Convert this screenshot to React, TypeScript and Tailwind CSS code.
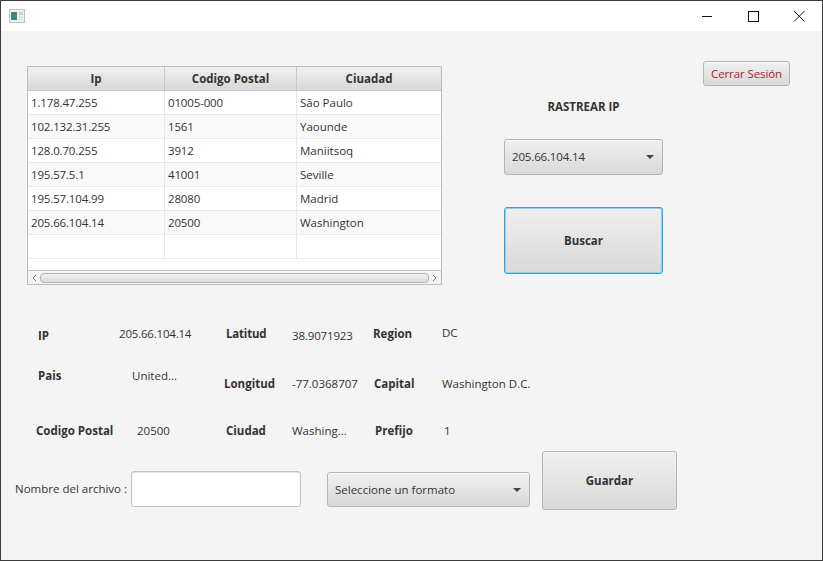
const rows = [
  ['1.178.47.255', '01005-000', 'São Paulo'],
  ['102.132.31.255', '1561', 'Yaounde'],
  ['128.0.70.255', '3912', 'Maniitsoq'],
  ['195.57.5.1', '41001', 'Seville'],
  ['195.57.104.99', '28080', 'Madrid'],
  ['205.66.104.14', '20500', 'Washington'],
  ['', '', ''],
];

const btn =
  'bg-gradient-to-b from-[#f0f0f0] to-[#d9d9d9] border border-[#b4b4b4] rounded-[3px] shadow-[inset_0_1px_0_#fafafa]';

const Caret = () => (
  <div className="w-0 h-0 border-l-[4px] border-r-[4px] border-t-[4px] border-l-transparent border-r-transparent border-t-[#444]" />
);

const App = () => {
  return (
    <div className="w-[823px] h-[561px] flex flex-col bg-[#f4f4f4] border border-[#3c3c3c] overflow-hidden text-[11.5px] leading-[16px] text-[#333] font-['Open_Sans',sans-serif]">
      {/* title bar */}
      <div className="h-[30px] bg-white flex items-center shrink-0">
        <svg width="16" height="14" viewBox="0 0 16 14" className="ml-[8px]">
          <rect x="0.5" y="0.5" width="15" height="13" fill="#eef1f0" stroke="#b9c2c0" />
          <rect x="2" y="3" width="6" height="8" fill="#3f8583" />
          <rect x="10" y="3" width="4" height="3" fill="#c9d3d2" />
          <rect x="10" y="7" width="4" height="4" fill="#dfe5e4" />
        </svg>
        <div className="ml-auto flex">
          <svg width="46" height="30" viewBox="0 0 46 30">
            <line x1="18" y1="15.5" x2="28" y2="15.5" stroke="#111" />
          </svg>
          <svg width="46" height="30" viewBox="0 0 46 30">
            <rect x="18.5" y="10.5" width="10" height="10" fill="none" stroke="#111" />
          </svg>
          <svg width="46" height="30" viewBox="0 0 46 30">
            <path d="M18 10 L28.5 20.5 M28.5 10 L18 20.5" stroke="#111" fill="none" />
          </svg>
        </div>
      </div>

      {/* top: table, search, logout */}
      <div className="flex items-start pt-[30px] pl-[26px]">
        <div className="w-[415px] h-[219px] mt-[5px] border border-[#bdbdbd] bg-white flex flex-col">
          <div className="flex h-[24px] shrink-0 font-bold bg-gradient-to-b from-[#f0f0f0] to-[#d8d8d8] border-b border-[#c4c4c4]">
            <div className="w-[137px] border-r border-[#c8c8c8] flex items-center justify-center">Ip</div>
            <div className="w-[132px] border-r border-[#c8c8c8] flex items-center justify-center">Codigo Postal</div>
            <div className="flex-1 flex items-center justify-center">Ciuadad</div>
          </div>
          <div className="flex-1 overflow-hidden">
            {rows.map((r, i) => (
              <div
                key={i}
                className={`flex h-[24px] border-b border-[#eaeaea] ${i % 2 === 1 ? 'bg-[#f9f9f9]' : 'bg-white'}`}
              >
                <div className="w-[137px] pl-[3px] border-r border-[#e8e8e8] flex items-center tracking-[-0.15px]">{r[0]}</div>
                <div className="w-[132px] pl-[3px] border-r border-[#e8e8e8] flex items-center tracking-[-0.15px]">{r[1]}</div>
                <div className="flex-1 pl-[3px] flex items-center">{r[2]}</div>
              </div>
            ))}
          </div>
          <div className="h-[14px] shrink-0 bg-[#f2f2f2] border-t border-[#c8c8c8] flex items-center px-[3px] gap-[2px]">
            <svg width="7" height="8" viewBox="0 0 7 8">
              <path d="M5 1 L2 4 L5 7" fill="none" stroke="#777" />
            </svg>
            <div className="flex-1 h-[10px] rounded-[4px] border border-[#b4b4b4] bg-gradient-to-b from-[#f0f0f0] to-[#dcdcdc]" />
            <svg width="7" height="8" viewBox="0 0 7 8">
              <path d="M2 1 L5 4 L2 7" fill="none" stroke="#777" />
            </svg>
          </div>
        </div>

        <div className="w-[159px] ml-[62px] mt-[38px] flex flex-col">
          <div className="font-bold text-center h-[16px]">RASTREAR IP</div>
          <div className={`${btn} mt-[24px] h-[36px] flex items-center pl-[7px] pr-[8px] justify-between`}>
            <span className="tracking-[-0.15px]">205.66.104.14</span>
            <Caret />
          </div>
          <div className="mt-[32px] h-[67px] rounded-[3px] border border-[#2ba6de] shadow-[inset_0_0_0_1px_#8fd0ee] bg-gradient-to-b from-[#efefef] to-[#d9d9d9] flex items-center justify-center font-bold">
            Buscar
          </div>
        </div>

        <div className={`${btn} ml-[40px] w-[87px] h-[25px] flex items-center justify-center text-[#a81c1c] tracking-[-0.1px]`}>
          Cerrar Sesión
        </div>
      </div>

      {/* info */}
      <div className="flex pl-[37px] mt-[41px] h-[16px]">
        <div className="w-[81px] mt-[2px] font-bold">IP</div>
        <div className="w-[107px] tracking-[-0.2px]">205.66.104.14</div>
        <div className="w-[66px] font-bold tracking-[-0.2px]">Latitud</div>
        <div className="w-[81px] mt-[2px] tracking-[-0.15px]">38.9071923</div>
        <div className="w-[69px] font-bold">Region</div>
        <div className="-mt-[1px]">DC</div>
      </div>
      <div className="flex pl-[37px] mt-[26px] h-[24px]">
        <div className="w-[94px] font-bold">Pais</div>
        <div className="w-[92px]">United...</div>
        <div className="w-[68px] mt-[8px] font-bold">Longitud</div>
        <div className="w-[82px] mt-[8px]">-77.0368707</div>
        <div className="w-[68px] mt-[8px] font-bold">Capital</div>
        <div className="mt-[8px]">Washington D.C.</div>
      </div>
      <div className="flex pl-[35px] mt-[31px] h-[16px]">
        <div className="w-[101px] font-bold">Codigo Postal</div>
        <div className="w-[89px]">20500</div>
        <div className="w-[66px] font-bold">Ciudad</div>
        <div className="w-[83px]">Washing...</div>
        <div className="w-[69px] font-bold">Prefijo</div>
        <div>1</div>
      </div>

      {/* save */}
      <div className="flex items-start pl-[14px] mt-[12px]">
        <div className="w-[116px] mt-[30px] whitespace-nowrap">Nombre del archivo :</div>
        <div className="w-[170px] h-[36px] mt-[20px] bg-white border border-[#c2c2c2] rounded-[3px] shadow-[inset_0_1px_1px_#e4e4e4]" />
        <div className={`${btn} w-[203px] h-[35px] ml-[26px] mt-[21px] flex items-center justify-between pl-[7px] pr-[8px]`}>
          <span>Seleccione un formato</span>
          <Caret />
        </div>
        <div className={`${btn} w-[135px] h-[59px] ml-[12px] flex items-center justify-center font-bold`}>
          Guardar
        </div>
      </div>
    </div>
  );
};

export default App;
